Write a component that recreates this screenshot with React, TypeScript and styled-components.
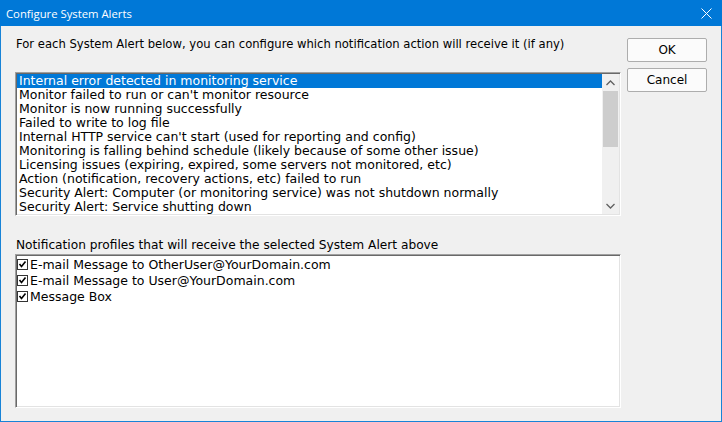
import React, { useState } from "react";
import styled, { createGlobalStyle } from "styled-components";

const GlobalStyle = createGlobalStyle`
    html, body {
        margin: 0;
        padding: 0;
        background: #ffffff;
    }
`;

const Window = styled.div`
    width: 722px;
    height: 422px;
    box-sizing: border-box;
    display: flex;
    flex-direction: column;
    border: 1px solid #1883d7;
    border-top: 0;
    background: #f0f0f0;
    font-family: "DejaVu Sans", Tahoma, sans-serif;
    font-size: 11px;
    color: #000;
`;

const TitleBar = styled.div`
    height: 26px;
    margin: 0 -1px;
    background: #0078d7;
    color: #fff;
    display: flex;
    align-items: center;
    justify-content: space-between;
    padding: 0 10px 0 6px;
    font-family: "Open Sans", "Noto Sans", sans-serif;
    font-size: 11.3px;
`;

const CloseIcon = styled.svg`
    width: 11px;
    height: 11px;
    margin-top: 1px;
`;

const Body = styled.div`
    flex: 1;
    display: flex;
    gap: 6px;
    padding: 11px 14px 13px 14px;
`;

const Main = styled.div`
    width: 607px;
    display: flex;
    flex-direction: column;
`;

const Caption = styled.div<{ $size: number; $top?: number; $gap: number }>`
    font-size: ${p => p.$size}px;
    line-height: 14px;
    padding-left: 1px;
    margin-top: ${p => p.$top ?? 0}px;
    margin-bottom: ${p => p.$gap}px;
    white-space: nowrap;
`;

const Sunken = styled.div<{ $height: number }>`
    height: ${p => p.$height}px;
    box-sizing: border-box;
    background: #fff;
    border-top: 1px solid #a0a0a0;
    border-left: 1px solid #a0a0a0;
    border-right: 1px solid #ffffff;
    border-bottom: 1px solid #ffffff;
    box-shadow: inset 1px 1px 0 #696969, inset -1px -1px 0 #e3e3e3;
    padding: 1px;
    display: flex;
    overflow: hidden;
    font-size: 12.5px;
`;

const Items = styled.div`
    flex: 1;
    display: flex;
    flex-direction: column;
`;

const Row = styled.div<{ $selected?: boolean }>`
    height: 14px;
    line-height: 14px;
    padding-left: 2px;
    white-space: nowrap;
    background: ${p => (p.$selected ? "#0078d7" : "transparent")};
    color: ${p => (p.$selected ? "#fff" : "#000")};
    cursor: default;
`;

const ScrollBar = styled.div`
    width: 17px;
    background: #f0f0f0;
    display: flex;
    flex-direction: column;
`;

const Arrow = styled.div`
    height: 17px;
    display: flex;
    align-items: center;
    justify-content: center;
`;

const Track = styled.div`
    flex: 1;
    padding: 0 1px;
`;

const Thumb = styled.div`
    height: 56px;
    background: #cdcdcd;
`;

const CheckRow = styled.div`
    height: 16px;
    display: flex;
    align-items: center;
    gap: 2px;
    white-space: nowrap;
`;

const CheckBox = styled.div`
    width: 11px;
    height: 11px;
    box-sizing: border-box;
    border: 1px solid #333;
    background: #fff;
    display: flex;
    align-items: center;
    justify-content: center;
`;

const Buttons = styled.div`
    width: 80px;
    display: flex;
    flex-direction: column;
    gap: 6px;
    padding-top: 1px;
`;

const Button = styled.button`
    height: 24px;
    box-sizing: border-box;
    border: 1px solid #adadad;
    border-radius: 2px;
    background: #fbfbfb;
    color: #000;
    font-family: "DejaVu Sans", Tahoma, sans-serif;
    font-size: 12px;
    padding: 0;
`;

const alerts = [
    "Internal error detected in monitoring service",
    "Monitor failed to run or can't monitor resource",
    "Monitor is now running successfully",
    "Failed to write to log file",
    "Internal HTTP service can't start (used for reporting and config)",
    "Monitoring is falling behind schedule (likely because of some other issue)",
    "Licensing issues (expiring, expired, some servers not monitored, etc)",
    "Action (notification, recovery actions, etc) failed to run",
    "Security Alert: Computer (or monitoring service) was not shutdown normally",
    "Security Alert: Service shutting down"
];

const profiles = [
    "E-mail Message to OtherUser@YourDomain.com",
    "E-mail Message to User@YourDomain.com",
    "Message Box"
];

function App() {
    const [selected, setSelected] = useState(0);

    return (
        <>
            <GlobalStyle />
            <Window>
                <TitleBar>
                    <span>Configure System Alerts</span>
                    <CloseIcon viewBox="0 0 11 11">
                        <path d="M0.5 0.5 L10.5 10.5 M10.5 0.5 L0.5 10.5" stroke="#fff" strokeWidth="1" />
                    </CloseIcon>
                </TitleBar>
                <Body>
                    <Main>
                        <Caption $size={11.6} $gap={21}>
                            For each System Alert below, you can configure which notification action will receive it (if any)
                        </Caption>
                        <Sunken $height={144}>
                            <Items>
                                {alerts.map((a, i) => (
                                    <Row key={a} $selected={i === selected} onClick={() => setSelected(i)}>
                                        {a}
                                    </Row>
                                ))}
                            </Items>
                            <ScrollBar>
                                <Arrow>
                                    <svg width="9" height="6" viewBox="0 0 9 6">
                                        <path d="M0.5 5 L4.5 1 L8.5 5" fill="none" stroke="#606060" strokeWidth="1.3" />
                                    </svg>
                                </Arrow>
                                <Track>
                                    <Thumb />
                                </Track>
                                <Arrow>
                                    <svg width="9" height="6" viewBox="0 0 9 6">
                                        <path d="M0.5 1 L4.5 5 L8.5 1" fill="none" stroke="#606060" strokeWidth="1.3" />
                                    </svg>
                                </Arrow>
                            </ScrollBar>
                        </Sunken>
                        <Caption $size={12.2} $top={22} $gap={2}>
                            Notification profiles that will receive the selected System Alert above
                        </Caption>
                        <Sunken $height={154}>
                            <Items>
                                {profiles.map(p => (
                                    <CheckRow key={p}>
                                        <CheckBox>
                                            <svg width="9" height="9" viewBox="0 0 9 9">
                                                <path d="M1.5 4 L3.5 6.5 L7.5 1.5" fill="none" stroke="#000" strokeWidth="1.6" />
                                            </svg>
                                        </CheckBox>
                                        {p}
                                    </CheckRow>
                                ))}
                            </Items>
                        </Sunken>
                    </Main>
                    <Buttons>
                        <Button>OK</Button>
                        <Button>Cancel</Button>
                    </Buttons>
                </Body>
            </Window>
        </>
    );
}

export default App;
